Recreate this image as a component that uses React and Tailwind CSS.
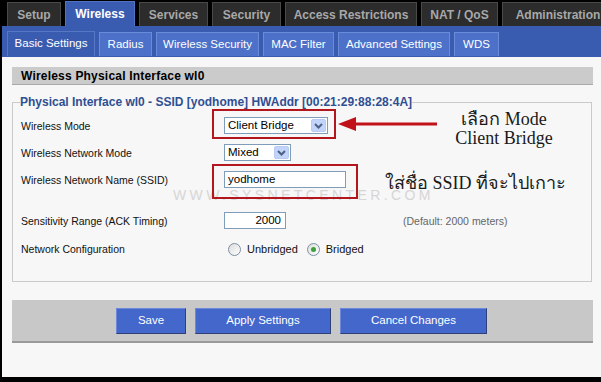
import React from 'react';

const topTabs = [
  { label: 'Setup', w: 'w-[54px]' },
  { label: 'Wireless', w: 'w-[70px]', active: true },
  { label: 'Services', w: 'w-[69px]' },
  { label: 'Security', w: 'w-[69px]' },
  { label: 'Access Restrictions', w: 'w-[132px]' },
  { label: 'NAT / QoS', w: 'w-[77px]' },
  { label: 'Administration', w: 'w-[112px]' },
];

const subTabs = [
  { label: 'Basic Settings', w: 'w-[88px]', active: true },
  { label: 'Radius', w: 'w-[53px]' },
  { label: 'Wireless Security', w: 'w-[103px]' },
  { label: 'MAC Filter', w: 'w-[71px]' },
  { label: 'Advanced Settings', w: 'w-[112px]' },
  { label: 'WDS', w: 'w-[45px]' },
];

const Chevron = () => (
  <svg width="9" height="6" viewBox="0 0 9 6">
    <path d="M1 1l3.5 3.5L8 1" stroke="#4d6185" strokeWidth="2" fill="none" />
  </svg>
);

// fake windows-xp style dropdown
const Select = ({ value, width }) => (
  <div className={`flex h-[17px] items-center border border-[#7f9db9] bg-white ${width}`}>
    <span className="flex-1 pl-[3px] text-[11.5px] leading-none text-black">{value}</span>
    <span className="mr-[1px] flex h-[13px] w-[15px] items-center justify-center rounded-[2px] border border-[#b9cbf3] bg-[#c3d4fa]">
      <Chevron />
    </span>
  </div>
);

const Radio = ({ checked }) => (
  <span className="flex h-[13px] w-[13px] items-center justify-center rounded-full border border-[#7d8fa3] bg-gradient-to-br from-[#dcdcdc] to-white">
    {checked && <span className="h-[5px] w-[5px] rounded-full bg-[#3aa43a]" />}
  </span>
);

const Row = ({ label, className, children }) => (
  <div className={`flex items-center pl-[1px] ${className}`}>
    <span className="w-[203px] pt-[2px] text-[10.5px] text-[#111]">{label}</span>
    {children}
  </div>
);

export default function App() {
  return (
    <div className="relative h-[382px] w-[601px] overflow-hidden bg-black font-['Liberation_Sans',Arial,sans-serif]">
      {/* top tabs */}
      <div className="flex h-[26px] items-end gap-[4px] pl-[7px]">
        {topTabs.map((t) =>
          t.active ? (
            <div
              key={t.label}
              className={`flex h-[25px] ${t.w} shrink-0 items-center justify-center border-l border-r border-t border-[#5273c4] bg-[#3a5cb0] text-[12px] font-bold text-white`}
            >
              {t.label}
            </div>
          ) : (
            <div
              key={t.label}
              className={`flex h-[24px] ${t.w} shrink-0 items-center justify-center border-l border-r border-t border-[#4a4a4a] bg-[#2c2c2c] text-[12px] font-bold text-[#a8a8a8]`}
            >
              {t.label}
            </div>
          )
        )}
      </div>

      {/* sub tabs */}
      <div className="ml-[2px] flex h-[31px] items-end gap-[4px] bg-[#3a5cb0] pb-[1px] pl-[5px]">
        {subTabs.map((t) => (
          <div
            key={t.label}
            className={`flex shrink-0 items-center justify-center border-l border-r border-t text-[11.5px] text-white ${t.w} ${
              t.active ? 'h-[25px] border-[#5577c6] bg-[#3a5cb0]' : 'h-[24px] border-[#6a8bd8] bg-[#4d71c8]'
            }`}
          >
            {t.label}
          </div>
        ))}
      </div>

      {/* content */}
      <div className="ml-[2px] h-[320px] bg-[#f7f7f7] pl-[10px] pr-[8px] pt-[10px]">
        <div className="flex h-[18px] items-center border-b border-[#a9a9a9] bg-[#cbcbcb] pl-[9px] text-[12px] font-bold tracking-[0.2px] text-black">
          Wireless Physical Interface wl0
        </div>

        <fieldset className="mt-[10px] mr-[1px] border border-[#cacaca] pb-[24px] pl-[7px]">
          <legend className="text-[12px] font-bold leading-[14px] text-[#2f4f93]">
            Physical Interface wl0 - SSID [yodhome] HWAddr [00:21:29:88:28:4A]
          </legend>

          <Row label="Wireless Mode" className="mt-[8px] h-[17px]">
            <Select value="Client Bridge" width="w-[104px]" />
          </Row>
          <Row label="Wireless Network Mode" className="mt-[10px] h-[17px]">
            <Select value="Mixed" width="w-[67px]" />
          </Row>
          <Row label="Wireless Network Name (SSID)" className="mt-[10px] h-[17px]">
            <div className="relative z-10 flex h-[17px] w-[122px] items-center border border-[#7f9db9] bg-white pl-[3px] text-[11.5px] text-black">
              yodhome
            </div>
          </Row>
          <Row label="Sensitivity Range (ACK Timing)" className="mt-[24px] h-[17px]">
            <div className="flex h-[17px] w-[62px] items-center justify-end border border-[#7f9db9] bg-white pr-[4px] text-[11.5px] text-black">
              2000
            </div>
            <span className="ml-[117px] pt-[2px] text-[10.5px] text-[#666]">(Default: 2000 meters)</span>
          </Row>
          <Row label="Network Configuration" className="mt-[12px] h-[16px]">
            <div className="flex items-center pl-[4px] text-[11px] text-[#111]">
              <Radio />
              <span className="ml-[6px]">Unbridged</span>
              <span className="ml-[9px]">
                <Radio checked />
              </span>
              <span className="ml-[6px]">Bridged</span>
            </div>
          </Row>
        </fieldset>

        {/* buttons */}
        <div className="mt-[18px] flex h-[43px] items-center justify-center gap-[9px] border-b-2 border-[#9a9a9a] bg-[#c8c8c8] pr-[2px]">
          {[
            ['Save', 'w-[70px]'],
            ['Apply Settings', 'w-[136px]'],
            ['Cancel Changes', 'w-[147px]'],
          ].map(([label, w]) => (
            <button
              key={label}
              className={`h-[26px] ${w} border border-[#6d88d8] border-b-[#2f3f77] border-r-[#2f3f77] bg-[#4467cc] text-[11.5px] text-white`}
            >
              {label}
            </button>
          ))}
        </div>
      </div>

      {/* watermark */}
      <div className="absolute left-[173px] top-[185px] text-[14px] tracking-[3.4px] text-[#d6d6d6]">
        WWW.SYSNETCENTER.COM
      </div>

      {/* red highlight boxes */}
      <div className="absolute left-[212px] top-[109px] z-20 h-[30px] w-[124px] border-2 border-[#b3171d]" />
      <div className="absolute left-[212px] top-[164px] z-20 h-[35px] w-[146px] border-2 border-[#b3171d]" />

      {/* arrow */}
      <svg className="absolute left-[338px] top-[116px]" width="100" height="16" viewBox="0 0 100 16">
        <polygon points="0,8 18,1 18,15" fill="#c1121a" />
        <rect x="16" y="6.5" width="83" height="3" fill="#c1121a" />
      </svg>

      {/* annotations */}
      <div className="absolute left-[444px] top-[110px] w-[120px] text-center font-['Liberation_Serif','DejaVu_Serif',serif] text-[18px] leading-[19px] text-[#1a1a1a]">
        <div>เลือก Mode</div>
        <div>Client Bridge</div>
      </div>
      <div className="absolute left-[385px] top-[173px] font-['Liberation_Serif','DejaVu_Serif',serif] text-[18px] leading-[20px] text-[#1a1a1a]">
        ใส่ชื่อ SSID ที่จะไปเกาะ
      </div>
    </div>
  );
}
